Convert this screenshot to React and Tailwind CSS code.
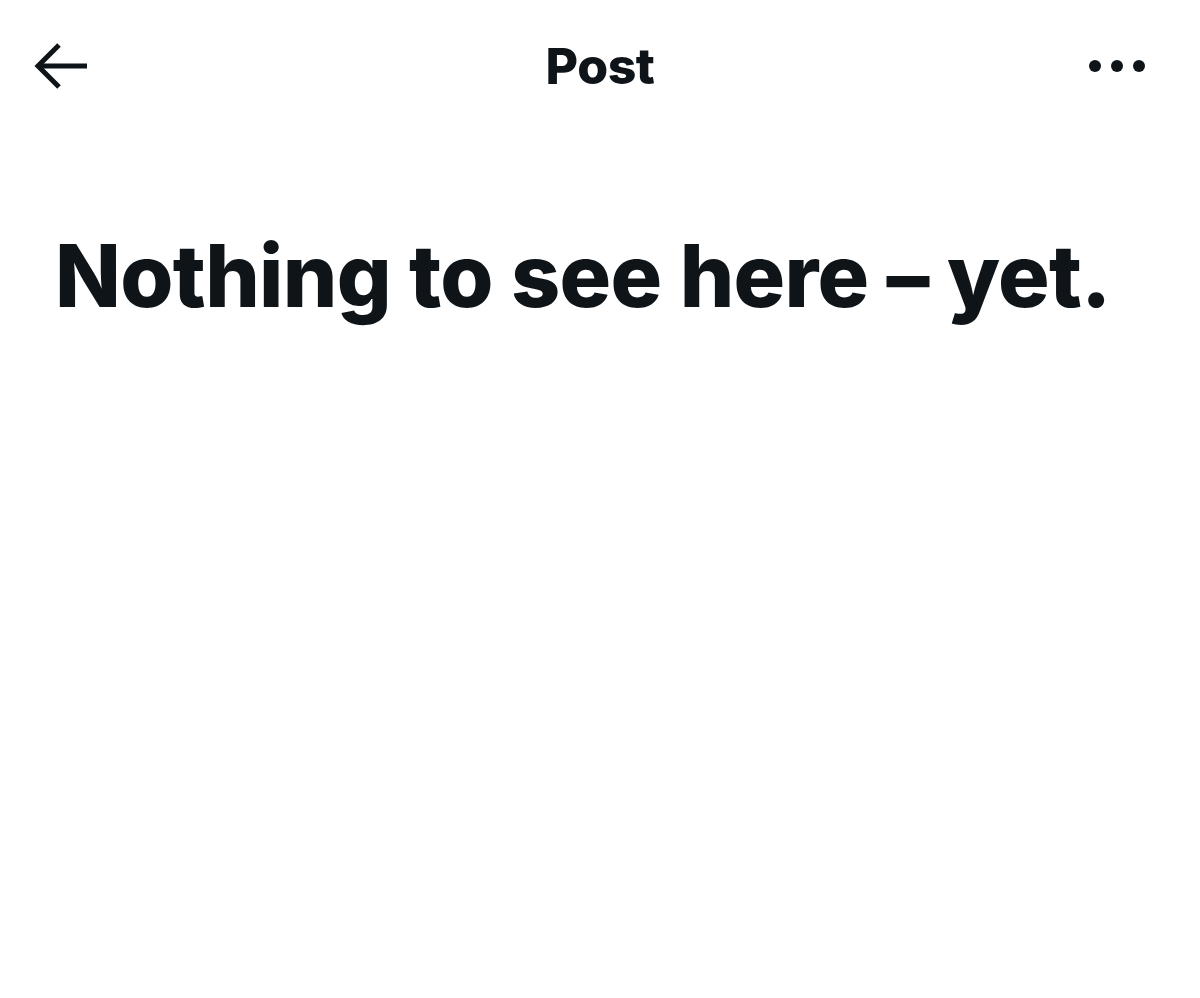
import React from 'react';

const BackArrow = () => (
  <svg width="54" height="46" viewBox="0 0 54 46" fill="none" stroke="#0f1419" strokeWidth="5" strokeLinecap="butt">
    <path d="M4 23 H53" />
    <path d="M25 2 L4 23 L25 44" />
  </svg>
);

const MoreDots = () => (
  <svg width="58" height="14" viewBox="0 0 58 14" fill="#0f1419">
    <circle cx="7" cy="7" r="6" />
    <circle cx="29" cy="7" r="6" />
    <circle cx="51" cy="7" r="6" />
  </svg>
);

export default function App() {
  return (
    <div className="w-[1200px] h-[998px] bg-white text-[#0f1419] font-['Inter',sans-serif]">
      {/* Header */}
      <div className="grid grid-cols-[1fr_auto_1fr] items-center h-[132px] px-[34px]">
        <div className="justify-self-start">
          <BackArrow />
        </div>
        <h1 className="text-[50px] font-extrabold tracking-[-0.5px]">Post</h1>
        <div className="justify-self-end mr-[20px]">
          <MoreDots />
        </div>
      </div>

      {/* Empty state */}
      <div className="pl-[55px] pt-[101px]">
        <h2 className="text-[86px] leading-none font-extrabold tracking-[-0.7px]">
          Nothing to see here – yet.
        </h2>
      </div>
    </div>
  );
}
